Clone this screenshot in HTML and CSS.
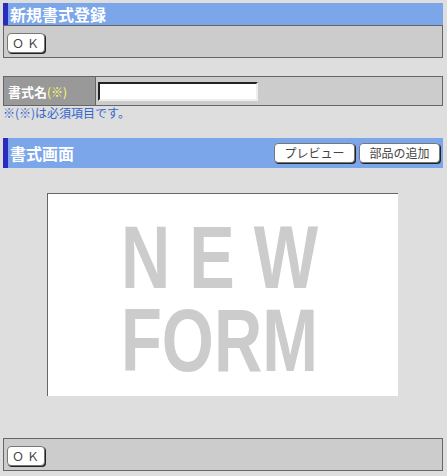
FILE: index.html
```html
<!DOCTYPE html>
<html lang="ja">
<head>
    <meta charset="UTF-8">
    <meta name="viewport" content="width=device-width, initial-scale=1.0">
    <title>新規書式登録</title>
    <link rel="stylesheet" href="styles.css">
</head>
<body>
    <div id="page">
        <h1 class="bar">新規書式登録</h1>
        <div class="toolbar">
            <button class="btn btn-ok">ＯＫ</button>
        </div>

        <table class="form-table">
            <tr>
                <th>書式名<span class="req">(※)</span></th>
                <td><input type="text" class="name-input"></td>
            </tr>
        </table>
        <p class="note">※(※)は必須項目です。</p>

        <div class="bar bar-tools">
            <h2>書式画面</h2>
            <div class="bar-buttons">
                <button class="btn btn-wide">プレビュー</button>
                <button class="btn btn-wide">部品の追加</button>
            </div>
        </div>

        <div class="canvas">
            <svg class="new-form" width="351" height="202" viewBox="0 0 351 202">
                <text x="73" y="94" textLength="197" lengthAdjust="spacingAndGlyphs">N E W</text>
                <text x="73" y="177" textLength="197" lengthAdjust="spacingAndGlyphs">FORM</text>
            </svg>
        </div>

        <div class="toolbar toolbar-bottom">
            <button class="btn btn-ok">ＯＫ</button>
        </div>
    </div>
</body>
</html>
```

FILE: styles.css
```css
body {
    margin: 0;
    padding: 3px 0 0 3px;
    background-color: #dedede;
    font-family: "Noto Sans CJK JP", "DejaVu Sans", sans-serif;
}

#page {
    width: 440px;
}

.bar {
    margin: 0;
    height: 22px;
    background-color: #7ba6ea;
    border-left: 5px solid #2b2bbf;
    color: #fff;
    font-size: 16px;
    font-weight: bold;
    line-height: 22px;
    padding-left: 2px;
}

.toolbar {
    border: 1px solid #666;
    background-color: #cccccc;
    padding: 3px 3px 6px 3px;
    height: 22px;
}

.btn {
    font-family: "Noto Sans CJK JP", "DejaVu Sans", sans-serif;
    font-size: 12px;
    color: #444;
    background-color: #fff;
    border: 1px solid #777;
    border-radius: 4px;
    box-shadow: 1px 1px 0 #222;
    height: 20px;
    padding: 0;
    line-height: 18px;
    cursor: pointer;
}

.btn-ok {
    width: 38px;
    letter-spacing: 3px;
    padding-left: 2px;
}

.btn-wide {
    width: 81px;
    margin-left: 4px;
}

.form-table {
    margin-top: 18px;
    width: 440px;
    border-collapse: collapse;
}

.form-table th,
.form-table td {
    border: 1px solid #666;
    height: 28px;
    padding: 0;
}

.form-table th {
    width: 87px;
    background-color: #999;
    color: #fff;
    font-size: 13px;
    font-weight: bold;
    text-align: left;
    padding-left: 4px;
}

.form-table td {
    background-color: #ccc;
    padding-left: 2px;
}

.req {
    color: #ffff66;
    font-weight: normal;
    font-size: 12px;
}

.name-input {
    display: block;
    width: 160px;
    height: 19px;
    box-sizing: border-box;
    border: 2px solid;
    border-color: #222 #eee #eee #222;
    background-color: #fff;
    margin: 0;
}

.note {
    margin: 0;
    color: #3366cc;
    font-size: 12px;
    line-height: 14px;
}

.bar-tools {
    margin-top: 18px;
    height: 30px;
    display: flex;
    align-items: center;
    justify-content: space-between;
}

.bar-tools h2 {
    margin: 0;
    font-size: 16px;
}

.bar-buttons {
    display: flex;
    padding-right: 3px;
}

.canvas {
    margin: 25px 0 0 44px;
    width: 350px;
    height: 202px;
    background-color: #fff;
    border-top: 1px solid #666;
    border-left: 1px solid #666;
}

.new-form {
    display: block;
}

.new-form text {
    font-family: "Liberation Sans", Arial, sans-serif;
    font-weight: bold;
    font-size: 89px;
    fill: #cccccc;
}

.toolbar-bottom {
    margin-top: 42px;
}
```
